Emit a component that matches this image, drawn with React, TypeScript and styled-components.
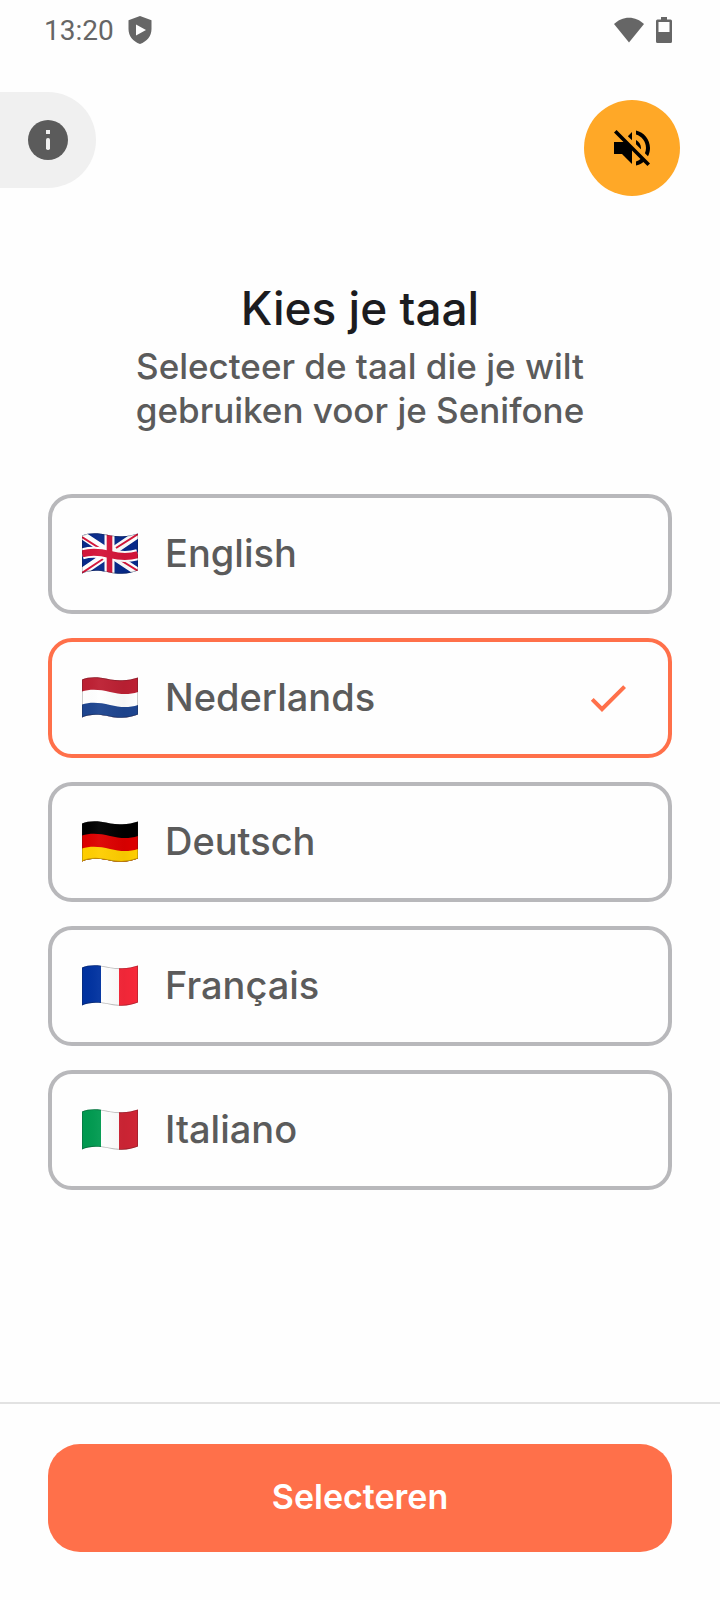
import React, { useState } from "react";
import styled, { createGlobalStyle } from "styled-components";

const GlobalStyle = createGlobalStyle`
  *, *::before, *::after { box-sizing: border-box; }
  body {
    margin: 0;
    background: #fefefe;
    color: #5b5b5b;
    font-family: Inter, "Liberation Sans", sans-serif;
  }
`;

const Screen = styled.div`
  display: flex;
  flex-direction: column;
  min-height: 100vh;
`;

const StatusBar = styled.div`
  display: flex;
  align-items: center;
  justify-content: space-between;
  height: 60px;
  padding: 0 46px 0 44px;
  color: #666666;
`;

const StatusGroup = styled.div`
  display: flex;
  align-items: center;
  gap: 12px;
`;

const Clock = styled.time`
  padding-top: 2px;
  font-family: Roboto, sans-serif;
  font-size: 28px;
  line-height: 32px;
`;

const Header = styled.header`
  display: flex;
  align-items: flex-start;
  justify-content: space-between;
  padding: 32px 40px 0 0;
`;

const HeaderButton = styled.button`
  display: flex;
  align-items: center;
  justify-content: center;
  width: 96px;
  height: 96px;
  padding: 0;
  border: 0;
  cursor: pointer;
`;

const InfoButton = styled(HeaderButton)`
  border-radius: 0 48px 48px 0;
  background: #f0f0f0;
  color: #5b5b5b;
`;

const SoundButton = styled(HeaderButton)`
  margin-top: 8px;
  border-radius: 50%;
  background: #ffa827;
  color: #000000;
`;

const Main = styled.main`
  flex: 1;
  padding: 84px 48px 48px;
`;

const Title = styled.h1`
  margin: 0 0 8px;
  color: #1c1c1f;
  font-size: 46px;
  font-weight: 500;
  line-height: 56px;
  text-align: center;
`;

const Subtitle = styled.p`
  max-width: 480px;
  margin: 0 auto 62px;
  font-size: 35px;
  font-weight: 500;
  line-height: 44px;
  text-align: center;
`;

const Options = styled.div`
  display: flex;
  flex-direction: column;
  gap: 24px;
`;

const Option = styled.label<{ $selected: boolean }>`
  display: flex;
  align-items: center;
  gap: 27px;
  height: 120px;
  padding: 0 36px 0 30px;
  border: 4px solid ${(p) => (p.$selected ? "#ff704a" : "#b8b8bb")};
  border-radius: 24px;
  cursor: pointer;
`;

const HiddenRadio = styled.input`
  position: absolute;
  width: 1px;
  height: 1px;
  margin: 0;
  opacity: 0;
`;

const OptionName = styled.span`
  flex: 1;
  padding-bottom: 3px;
  font-size: 38px;
  font-weight: 500;
  line-height: 48px;
`;

const Footer = styled.footer`
  padding: 40px 48px 48px;
  border-top: 2px solid #e2e2e2;
`;

const SubmitButton = styled.button`
  display: block;
  width: 100%;
  height: 108px;
  padding: 0 0 2px;
  border: 0;
  border-radius: 32px;
  background: #ff704a;
  color: #ffffff;
  font-family: inherit;
  font-size: 34px;
  font-weight: 600;
  line-height: 44px;
  cursor: pointer;
`;

const FLAG_OUTLINE =
  "M0 2.5C5 .4 12-.2 19 .8c8 1.1 13 2.9 21 2.5C46 3 51 2 56 .4V37.600c-5 2-10 3-16 3.200-8 .3-13-1.700-21-2.800C12 37.200 5 38 0 40.600z";

const wave = (y: number) => `M0 ${y + 1}C8 ${y - 1.5} 18 ${y - 1} 28 ${y + 1.5}S47 ${y + 4.5} 56 ${y + 1.5}`;

function HorizontalBands({ colors }: { colors: string[] }) {
  return (
    <>
      <rect width="56" height="42" fill={colors[0]} />
      <path d={`${wave(13.5)}V42H0z`} fill={colors[1]} />
      <path d={`${wave(26.5)}V42H0z`} fill={colors[2]} />
    </>
  );
}

function VerticalBands({ colors }: { colors: string[] }) {
  return (
    <>
      <rect width="19" height="42" fill={colors[0]} />
      <rect x="19" width="18" height="42" fill={colors[1]} />
      <rect x="37" width="19" height="42" fill={colors[2]} />
    </>
  );
}

function UnionJack() {
  return (
    <>
      <rect width="56" height="42" fill="#06298a" />
      <path d="M0 2L56 39M0 39L56 1" stroke="#fff" strokeWidth="8" />
      <path d="M0 4L22 18M56 1L34 15" stroke="#d4153a" strokeWidth="2" />
      <path d="M0 40L21 26M56 38L35 25" stroke="#d4153a" strokeWidth="2" />
      <path d="M27.500 0V42" stroke="#fff" strokeWidth="10" />
      <path d={wave(20)} fill="none" stroke="#fff" strokeWidth="11" />
      <path d="M27.500 0V42" stroke="#d4153a" strokeWidth="5.600" />
      <path d={wave(20)} fill="none" stroke="#d4153a" strokeWidth="7" />
    </>
  );
}

function Flag({ code, children }: { code: string; children: React.ReactNode }) {
  return (
    <svg width="56" height="42" viewBox="0 0 56 42" aria-hidden="true">
      <defs>
        <clipPath id={`flag-${code}`}>
          <path d={FLAG_OUTLINE} />
        </clipPath>
        <linearGradient id={`shade-${code}`}>
          <stop offset="0" stopColor="#000" stopOpacity="0" />
          <stop offset=".3" stopColor="#fff" stopOpacity=".04" />
          <stop offset=".75" stopColor="#000" stopOpacity=".04" />
          <stop offset="1" stopColor="#000" stopOpacity="0" />
        </linearGradient>
      </defs>
      <g clipPath={`url(#flag-${code})`}>
        {children}
        <rect width="56" height="42" fill={`url(#shade-${code})`} />
        <path d={FLAG_OUTLINE} fill="none" stroke="#1a1a1a" strokeOpacity=".28" strokeWidth="1.600" />
      </g>
    </svg>
  );
}

const LANGUAGES = [
  { code: "en", name: "English", flag: <UnionJack /> },
  { code: "nl", name: "Nederlands", flag: <HorizontalBands colors={["#bd2033", "#ffffff", "#1e4590"]} /> },
  { code: "de", name: "Deutsch", flag: <HorizontalBands colors={["#000000", "#dd0000", "#ffce00"]} /> },
  { code: "fr", name: "Français", flag: <VerticalBands colors={["#0032a0", "#ffffff", "#f8283a"]} /> },
  { code: "it", name: "Italiano", flag: <VerticalBands colors={["#009a50", "#ffffff", "#d02535"]} /> },
];

export default function App() {
  const [selected, setSelected] = useState("nl");

  return (
    <Screen>
      <GlobalStyle />
      <StatusBar>
        <StatusGroup>
          <Clock>13:20</Clock>
          <svg width="28" height="28" viewBox="0 0 28 28" fill="currentColor" aria-hidden="true">
            <path fillRule="evenodd" d="M14 0L25.500 4.300V13c0 7-4.500 12.500-11.500 15C7 25.500 2.500 20 2.500 13V4.300zM10 8.500v11L20 14z" />
          </svg>
        </StatusGroup>
        <StatusGroup>
          <svg width="30" height="26" viewBox="0 0 30 26" fill="currentColor" aria-hidden="true">
            <path d="M15 25.500L0 7C4 3 9.300.7 15 .7S26 3 30 7z" />
          </svg>
          <svg width="18" height="26" viewBox="0 0 18 26" fill="currentColor" aria-hidden="true">
            <path fillRule="evenodd" d="M5 0h6v2.500h3.500A1.500 1.500 0 0116 4v20.500a1.500 1.500 0 01-1.500 1.500h-13A1.500 1.500 0 010 24.500V4a1.500 1.500 0 011.500-1.500H5zM2.500 5v10h11V5z" />
          </svg>
        </StatusGroup>
      </StatusBar>

      <Header>
        <InfoButton type="button" aria-label="Informatie">
          <svg width="40" height="40" viewBox="0 0 40 40" aria-hidden="true">
            <circle cx="20" cy="20" r="20" fill="currentColor" />
            <rect x="18" y="10" width="4" height="4" fill="#f0f0f0" />
            <rect x="18" y="18" width="4" height="12" rx="1.800" fill="#f0f0f0" />
          </svg>
        </InfoButton>
        <SoundButton type="button" aria-label="Geluid uit">
          <svg width="48" height="48" viewBox="0 0 24 24" fill="currentColor" aria-hidden="true">
            <path d="M16.5 12c0-1.77-1.02-3.29-2.5-4.03v2.210l2.450 2.450c.03-.2.05-.41.05-.63zm2.500 0c0 .94-.2 1.820-.54 2.640l1.510 1.510C20.630 14.910 21 13.500 21 12c0-4.280-2.990-7.860-7-8.770v2.060c2.890.86 5 3.540 5 6.710zM4.270 3L3 4.270 7.730 9H3v6h4l5 5v-6.730l4.250 4.250c-.67.52-1.420.93-2.250 1.180v2.060c1.380-.31 2.630-.95 3.690-1.810L19.730 21 21 19.730l-9-9L4.270 3zM12 4L9.910 6.090 12 8.180V4z" />
          </svg>
        </SoundButton>
      </Header>

      <Main>
        <Title>Kies je taal</Title>
        <Subtitle>Selecteer de taal die je wilt gebruiken voor je Senifone</Subtitle>
        <Options role="radiogroup" aria-label="Kies je taal">
          {LANGUAGES.map(({ code, name, flag }) => (
            <Option key={code} $selected={selected === code}>
              <HiddenRadio
                type="radio"
                name="language"
                value={code}
                checked={selected === code}
                onChange={() => setSelected(code)}
              />
              <Flag code={code}>{flag}</Flag>
              <OptionName>{name}</OptionName>
              {selected === code && (
                <svg width="48" height="48" viewBox="0 0 24 24" fill="#ff704a" aria-hidden="true">
                  <path d="M9 16.170L4.830 12l-1.420 1.410L9 19 21 7l-1.410-1.410z" />
                </svg>
              )}
            </Option>
          ))}
        </Options>
      </Main>

      <Footer>
        <SubmitButton type="button">Selecteren</SubmitButton>
      </Footer>
    </Screen>
  );
}
